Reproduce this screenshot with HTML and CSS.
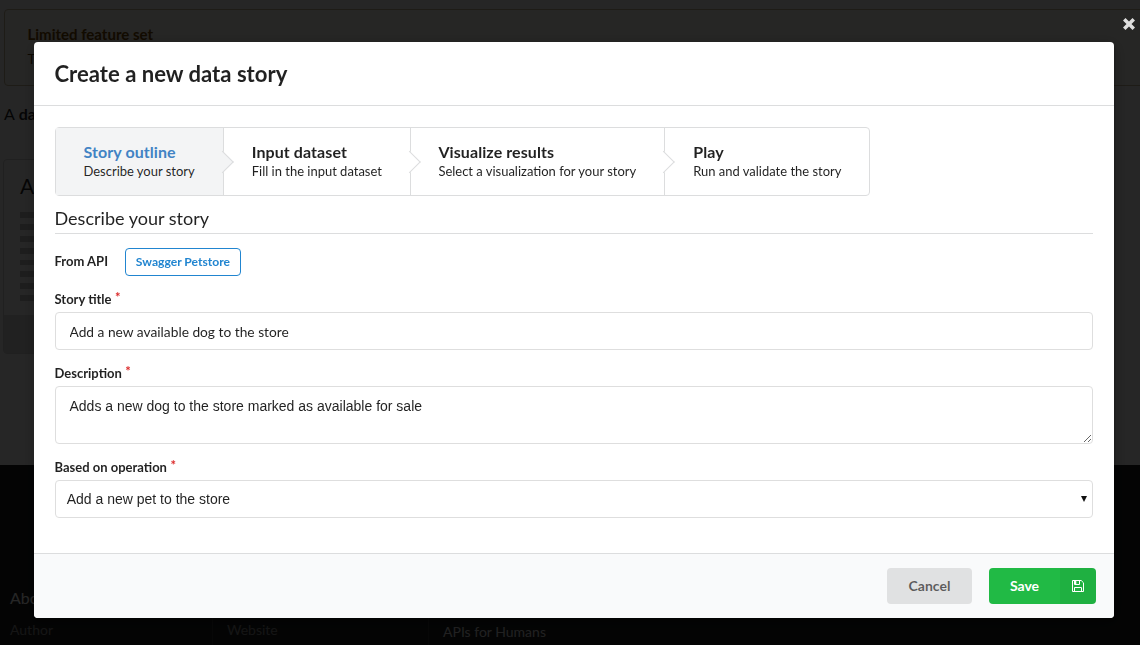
FILE: index.html
```html
<!DOCTYPE html>
<html lang="en">
<head>
<meta charset="utf-8">
<title>Create a new data story</title>
<link rel="stylesheet" href="styles.css">
</head>
<body>
<div class="page">
  <main class="content">
    <section class="message">
      <div class="message-title">Limited feature set</div>
      <p class="message-text">T</p>
    </section>
    <h3 class="intro"><span class="thin">A</span> data</h3>
    <article class="card">
      <div class="card-body">
        <div class="card-title">A</div>
        <div class="lines"><i></i><i></i><i></i><i></i><i></i><i></i><i></i><i></i></div>
      </div>
      <div class="card-foot"></div>
    </article>
  </main>
  <footer class="footer">
    <div class="footer-title">About</div>
    <div class="footer-cols">
      <div class="footer-col">Author</div>
      <div class="footer-col">Website</div>
      <div class="footer-col bright">APIs for Humans</div>
    </div>
  </footer>
</div>

<div class="dimmer">
  <svg class="close" viewBox="0 0 12 12" width="12" height="12"><path d="M2.500 0 6 3.500 9.500 0 12 2.500 8.500 6 12 9.500 9.500 12 6 8.500 2.500 12 0 9.500 3.500 6 0 2.500z" fill="#dedede"/></svg>
  <div class="modal">
    <header class="modal-header">Create a new data story</header>
    <div class="modal-content">
      <div class="steps">
        <div class="step active">
          <div class="step-title">Story outline</div>
          <div class="step-text">Describe your story</div>
        </div>
        <div class="step">
          <div class="step-title">Input dataset</div>
          <div class="step-text">Fill in the input dataset</div>
        </div>
        <div class="step">
          <div class="step-title">Visualize results</div>
          <div class="step-text">Select a visualization for your story</div>
        </div>
        <div class="step">
          <div class="step-title">Play</div>
          <div class="step-text">Run and validate the story</div>
        </div>
      </div>
      <h4 class="section-title">Describe your story</h4>
      <div class="api-row">
        <span class="label">From API</span>
        <span class="api-tag">Swagger Petstore</span>
      </div>
      <div class="field">
        <label class="label required">Story title</label>
        <input class="control input" type="text" value="Add a new available dog to the store">
      </div>
      <div class="field">
        <label class="label required">Description</label>
        <textarea class="control textarea">Adds a new dog to the store marked as available for sale</textarea>
      </div>
      <div class="field">
        <label class="label required">Based on operation</label>
        <div class="control select"><span>Add a new pet to the store</span><svg viewBox="0 0 6 6" width="6" height="6"><path d="M0 0h6L3 6z" fill="#111"/></svg></div>
      </div>
    </div>
    <div class="actions">
      <button class="button cancel">Cancel</button>
      <button class="button save"><span class="save-text">Save</span><span class="save-icon"><svg viewBox="0 0 12 12" width="12" height="12" fill="none" stroke="#fff"><path d="M.5.5h8.700l2.300 2.300v8.700H.5z"/><path d="M2.500 11V7.500h7V11M2.500 1v3.500h5V1"/><path d="M3.500 1v3" stroke-width="1.600"/></svg></span></button>
    </div>
  </div>
</div>
</body>
</html>
```

FILE: styles.css
```css
* { box-sizing: border-box; }
body {
  margin: 0;
  height: 645px;
  overflow: hidden;
  font-family: Lato, "Liberation Sans", sans-serif;
  font-size: 14px;
  line-height: 20px;
  color: rgba(0, 0, 0, .87);
}

/* Page behind the dimmer */
.page { height: 645px; overflow: hidden; background: #fff; }
.content { height: 465px; padding: 9px 0 0 4px; }
.message {
  width: 1200px;
  height: 77px;
  padding: 14px 22.500px;
  border: 1px solid #c9ba9b;
  border-radius: 4px;
  background: #fffaf3;
  color: #573a08;
}
.message-title { font-size: 15px; font-weight: 700; color: #794b02; }
.message-text { margin: 5px 0 0; }
.intro { margin: 17px 0 0; font-size: 16px; line-height: 22px; font-weight: 700; }
.thin { font-weight: 400; }
.card {
  width: 300px;
  height: 195px;
  margin: 34px 0 0 -1px;
  display: flex;
  flex-direction: column;
  border: 1px solid #d4d4d5;
  border-radius: 4px;
}
.card-body { flex: 1; padding: 14px 16px; }
.card-title { font-size: 21px; line-height: 24px; }
.lines { display: grid; gap: 6px; margin-top: 14px; }
.lines i { height: 5.9px; background: #c4c4c4; }
.card-foot { height: 38px; background: #dcdcdc; }
.footer { height: 180px; padding: 121px 0 0 10px; background: #1b1c1d; color: rgba(255, 255, 255, .5); }
.footer-title { font-size: 16px; line-height: 24px; color: #fff; }
.footer-cols { display: flex; margin-top: 6px; }
.footer-col { width: 216px; height: 34px; padding-top: 4px; }
.footer-col:first-child { width: 202px; }
.footer-col + .footer-col { border-left: 1px solid #333; padding-left: 14px; }
.footer-col.bright { padding-top: 6px; color: #ddd; }

/* Modal */
.dimmer { position: fixed; inset: 0; padding: 42px 26px 27px 34px; background: rgba(0, 0, 0, .85); }
.close { position: absolute; left: 1123px; top: 18px; }
.modal {
  height: 576px;
  display: flex;
  flex-direction: column;
  overflow: hidden;
  border-radius: 4px;
  background: #fff;
  box-shadow: 1px 3px 3px 0 rgba(0, 0, 0, .2), 1px 3px 15px 2px rgba(0, 0, 0, .2);
}
.modal-header {
  height: 64px;
  padding: 17px 20.500px;
  border-bottom: 1px solid #dcddde;
  font-size: 22.100px;
  line-height: 29px;
  font-weight: 700;
}
.modal-content { flex: 1; padding: 21px; }
.steps {
  display: flex;
  width: 815px;
  height: 69px;
  border: 1px solid #dcddde;
  border-radius: 4px;
}
.step { position: relative; padding: 15px 28px 0; border-right: 1px solid #dcddde; }
.step:nth-child(1) { width: 168px; padding-left: 27.500px; }
.step:nth-child(2) { width: 187px; }
.step:nth-child(3) { width: 254px; padding-left: 27.700px; }
.step:nth-child(4) { flex: 1; padding-left: 28.500px; border: 0; }
.step:not(:last-child)::after {
  content: "";
  position: absolute;
  z-index: 1;
  top: 26px;
  right: -8px;
  width: 15px;
  height: 15px;
  border: solid #dcddde;
  border-width: 0 1px 1px 0;
  background: #fff;
  transform: translateX(-.5px) rotate(-45deg);
}
.step.active, .step.active::after { background: #f3f4f5; }
.step-title { font-size: 16px; line-height: 18px; font-weight: 700; letter-spacing: .08px; }
.active .step-title { color: #4183c4; }
.step-text { font-size: 12.980px; line-height: 17px; margin-top: 2px; white-space: nowrap; }
.section-title {
  margin: 9px 0 14px;
  height: 29px;
  border-bottom: 1px solid #dcddde;
  font-size: 18.050px;
  line-height: 26px;
  font-weight: 400;
  text-indent: -.5px;
}
.label { display: block; font-size: 13px; line-height: 18px; font-weight: 700; text-indent: -.5px; }
.required::after { content: "*"; margin-left: 3.500px; color: #db2828; vertical-align: top; line-height: 14px; font-size: 13px; }
.api-row { display: flex; align-items: center; gap: 16.800px; height: 28px; margin-bottom: 14px; }
.api-row .label { padding-bottom: 2px; }
.api-tag {
  width: 116px;
  height: 28px;
  padding: 0 10px;
  border: 1px solid #2185d0;
  border-radius: 4px;
  color: #2185d0;
  font-size: 12.100px;
  line-height: 26px;
  font-weight: 700;
  white-space: nowrap;
}
.field { margin-bottom: 14px; }
.control {
  display: block;
  width: 100%;
  height: 38px;
  margin: 4px 0 0;
  border: 1px solid #dedede;
  border-radius: 4px;
  background: #fff;
  color: rgba(0, 0, 0, .87);
  outline: 0;
}
.input { padding: 0 13.500px; font: 13.750px/17px Lato, sans-serif; }
.textarea { height: 58px; padding: 10px 13.500px; font: 14px/18px "Liberation Sans", sans-serif; resize: vertical; overflow: hidden; }
.select {
  display: flex;
  align-items: center;
  justify-content: space-between;
  padding: 0 5px 0 10.700px;
  font: 14px/18px "Liberation Sans", sans-serif;
}
.actions {
  display: flex;
  justify-content: flex-end;
  gap: 17px;
  height: 65px;
  padding: 14px 18px;
  border-top: 1px solid #dcddde;
  background: #f9fafb;
}
.button {
  height: 36px;
  padding: 0;
  border: 0;
  border-radius: 4px;
  font: 700 14px/36px Lato, sans-serif;
}
.cancel { width: 85px; background: #e0e1e2; color: rgba(0, 0, 0, .6); }
.save { display: flex; width: 107px; overflow: hidden; background: #21ba45; color: #fff; }
.save-text { flex: 1; }
.save-icon { width: 36px; height: 36px; display: grid; place-items: center; background: rgba(0, 0, 0, .05); }
```
